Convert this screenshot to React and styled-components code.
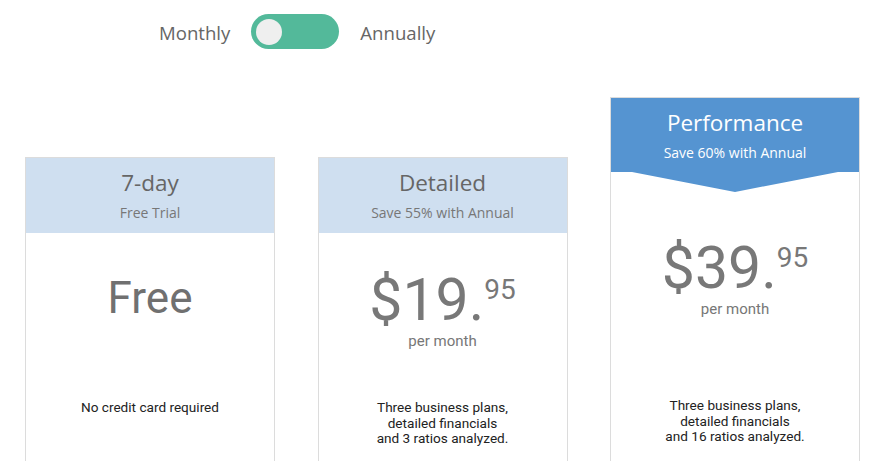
import React from "react";
import styled, { createGlobalStyle } from "styled-components";

const GlobalStyle = createGlobalStyle`
  html, body {
    margin: 0;
    padding: 0;
    background: #fff;
    overflow: hidden;
  }
  body {
    font-family: "Open Sans", "Liberation Sans", sans-serif;
  }
`;

const Page = styled.div`
  width: 881px;
  height: 461px;
  overflow: hidden;
`;

// toggle
const ToggleRow = styled.div`
  display: flex;
  align-items: center;
  gap: 21px;
  padding: 14px 0 0 159px;
`;
const ToggleLabel = styled.span`
  font-family: "Open Sans", sans-serif;
  font-size: 18.6px;
  line-height: 27px;
  color: #666;
  padding-top: 1px;
`;
const Switch = styled.div`
  width: 88px;
  height: 35px;
  border-radius: 18px;
  background: #53b99a;
  display: flex;
  align-items: center;
  padding-left: 5px;
  box-sizing: border-box;
`;
const Knob = styled.div`
  width: 26px;
  height: 26px;
  border-radius: 50%;
  background: #efefef;
`;

// cards
const CardRow = styled.div`
  display: flex;
  align-items: flex-end;
  gap: 42.5px;
  padding-left: 25px;
  margin-top: 48px;
`;
const Card = styled.div`
  width: 250px;
  height: ${(props) => props.height};
  border: 1px solid #dcdcdc;
  box-sizing: border-box;
  display: flex;
  flex-direction: column;
  background: #fff;
`;
const Header = styled.div`
  height: ${(props) => (props.featured ? "94px" : "75px")};
  box-sizing: border-box;
  padding-top: 11px;
  background: ${(props) => (props.featured ? "#5594d1" : "#cfdff0")};
  text-align: center;
  clip-path: ${(props) =>
    props.featured
      ? "polygon(0 0, 100% 0, 100% 74px, calc(100% - 21px) 74px, 50% 100%, 21px 74px, 0 74px)"
      : "none"};
`;
const Title = styled.div`
  font-family: "Open Sans", sans-serif;
  font-size: 22.5px;
  line-height: 28px;
  color: ${(props) => (props.light ? "#fff" : "#666")};
`;
const Subtitle = styled.div`
  font-family: "Open Sans", sans-serif;
  font-size: 14px;
  line-height: 16px;
  margin-top: 8px;
  color: ${(props) => (props.light ? "#fff" : "#777")};
`;
const PriceArea = styled.div`
  height: ${(props) => props.h}px;
  padding-top: ${(props) => props.pad}px;
  box-sizing: border-box;
  text-align: center;
  font-family: Roboto, "Liberation Sans", sans-serif;
`;
const FreeText = styled.div`
  font-size: 44px;
  line-height: 1;
  color: #707070;
`;
const Price = styled.div`
  font-size: 59px;
  line-height: 1;
  color: #787878;
  sup {
    font-size: 28px;
    line-height: 1;
    vertical-align: 21px;
  }
`;
const PerMonth = styled.div`
  font-size: 15px;
  line-height: 12px;
  color: #777;
  margin-top: 6px;
`;
const Description = styled.div`
  font-family: Roboto, "Liberation Sans", sans-serif;
  font-size: 13.6px;
  line-height: 15.5px;
  color: #222;
  text-align: center;
`;

const plans = [
  {
    title: "7-day",
    sub: "Free Trial",
    free: true,
    pad: 43,
    h: 167,
    height: "340px",
    desc: ["No credit card required"],
  },
  {
    title: "Detailed",
    sub: "Save 55% with Annual",
    price: "19",
    pad: 37,
    h: 167,
    height: "340px",
    desc: ["Three business plans,", "detailed financials", "and 3 ratios analyzed."],
  },
  {
    title: "Performance",
    sub: "Save 60% with Annual",
    price: "39",
    featured: true,
    pad: 46,
    h: 206,
    height: "400px",
    desc: ["Three business plans,", "detailed financials", "and 16 ratios analyzed."],
  },
];

export default function App() {
  return (
    <Page>
      <GlobalStyle />
      <ToggleRow>
        <ToggleLabel>Monthly</ToggleLabel>
        <Switch>
          <Knob />
        </Switch>
        <ToggleLabel>Annually</ToggleLabel>
      </ToggleRow>
      <CardRow>
        {plans.map((p) => (
          <Card key={p.title} height={p.height}>
            <Header featured={p.featured}>
              <Title light={p.featured}>{p.title}</Title>
              <Subtitle light={p.featured}>{p.sub}</Subtitle>
            </Header>
            <PriceArea pad={p.pad} h={p.h}>
              {p.free ? (
                <FreeText>Free</FreeText>
              ) : (
                <>
                  <Price>
                    ${p.price}.<sup>95</sup>
                  </Price>
                  <PerMonth>per month</PerMonth>
                </>
              )}
            </PriceArea>
            <Description>
              {p.desc.map((line) => (
                <div key={line}>{line}</div>
              ))}
            </Description>
          </Card>
        ))}
      </CardRow>
    </Page>
  );
}
